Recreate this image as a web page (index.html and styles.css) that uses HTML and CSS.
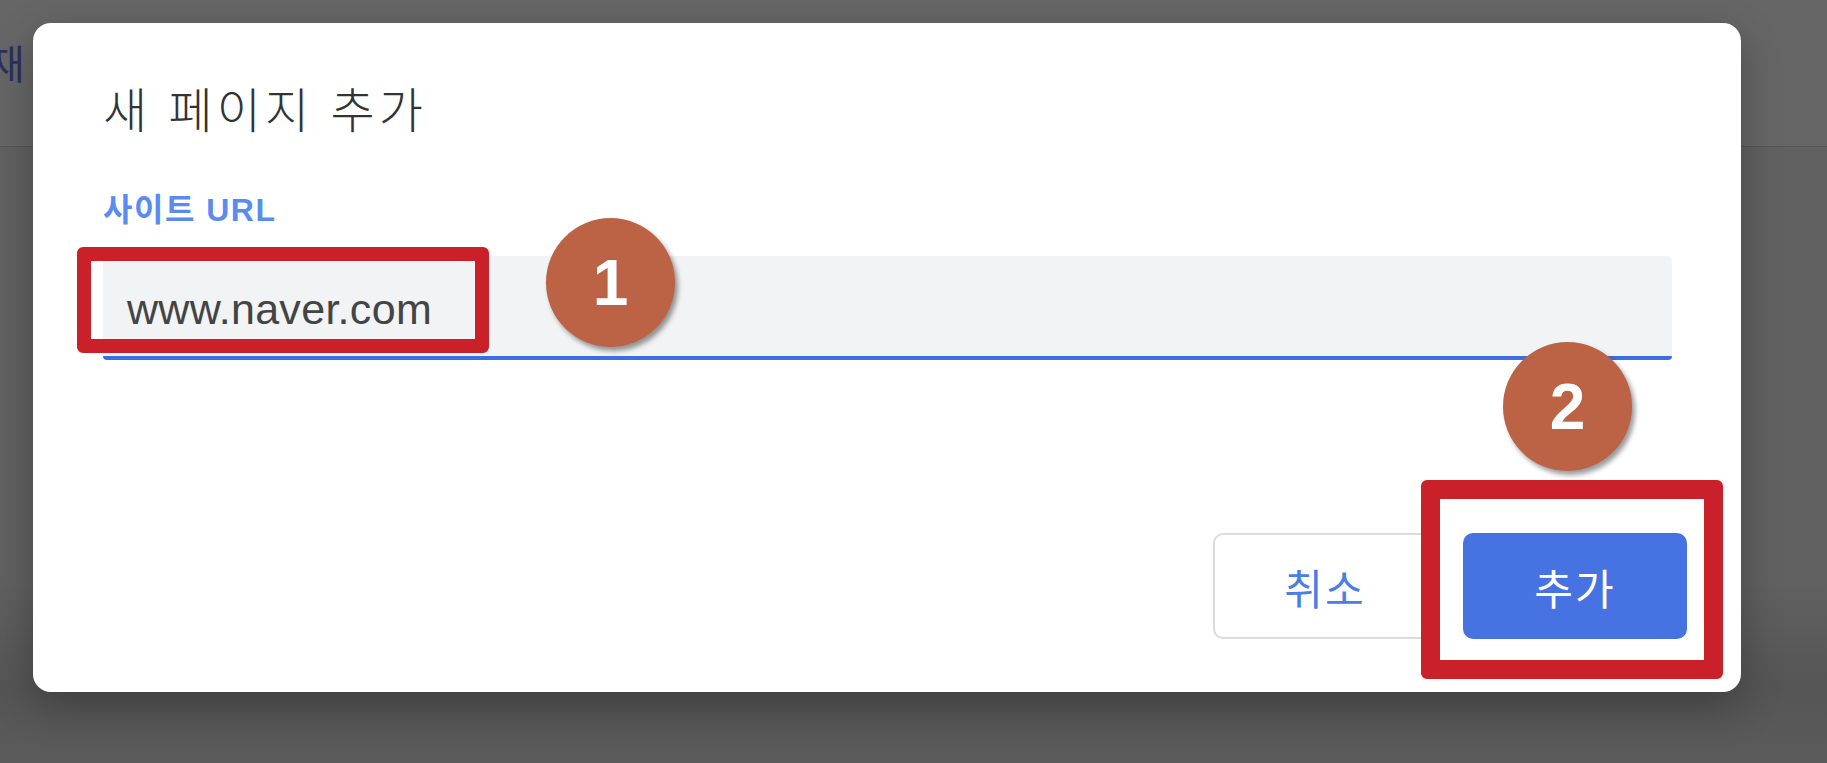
FILE: index.html
```html
<!DOCTYPE html>
<html lang="ko">
<head>
    <meta charset="UTF-8">
    <meta name="viewport" content="width=device-width, initial-scale=1.0">
    <title>새 페이지 추가</title>
    <link rel="stylesheet" href="styles.css">
</head>
<body>
    <div class="page">
        <div class="page-header">
            <span class="page-header-text">재</span>
        </div>
        <div class="page-body"></div>
    </div>

    <div class="dialog">
        <h1 class="dialog-title">새 페이지 추가</h1>
        <label class="field-label" for="site-url">사이트 URL</label>
        <div class="url-field" id="site-url">www.naver.com</div>
        <div class="dialog-footer">
            <button class="btn btn-cancel">취소</button>
            <button class="btn btn-add">추가</button>
        </div>
    </div>

    <!-- tutorial markers drawn over the dialog -->
    <div class="mark-box mark-box-url"></div>
    <div class="mark-box mark-box-add"></div>
    <div class="step step-one">1</div>
    <div class="step step-two">2</div>
</body>
</html>
```

FILE: styles.css
```css
body {
    margin: 0;
    padding: 0;
    width: 1827px;
    height: 763px;
    overflow: hidden;
    position: relative;
    background-color: #606060;
    font-family: 'Noto Sans CJK KR', 'Noto Sans', sans-serif;
}
.page {
    height: 100%;
    display: flex;
    flex-direction: column;
}
.page-header {
    height: 146px;
    background-color: #666666;
    border-bottom: 1px solid #555555;
    overflow: hidden;
}
.page-header-text {
    display: block;
    margin: 38px 0 0 -12px;
    font-size: 40px;
    line-height: 48px;
    color: #2b3060;
}
.page-body {
    flex: 1;
    background: linear-gradient(to bottom, #616161 0%, #616161 70%, #555555 88%, #5b5b5b 100%);
}
.dialog {
    position: absolute;
    left: 33px;
    top: 23px;
    width: 1708px;
    height: 669px;
    box-sizing: border-box;
    padding: 60px 54px 53px 70px;
    background-color: #FFFFFF;
    border-radius: 18px;
    box-shadow: 0 14px 40px rgba(0, 0, 0, 0.28);
    display: flex;
    flex-direction: column;
}
.dialog-title {
    margin: 0;
    font-size: 48px;
    line-height: 48px;
    font-weight: 300;
    letter-spacing: 4px;
    color: #333333;
}
.field-label {
    display: block;
    margin-top: 63px;
    font-family: 'Liberation Sans', 'Noto Sans CJK KR', sans-serif;
    font-size: 32px;
    line-height: 32px;
    font-weight: bold;
    letter-spacing: 1.5px;
    color: #5a8cf0;
}
.url-field {
    margin: 30px 15px 0 0;
    height: 104px;
    box-sizing: border-box;
    padding: 6px 24px 0;
    display: flex;
    align-items: center;
    background-color: #f1f3f4;
    border-bottom: 4px solid #3a6ee2;
    border-radius: 6px 6px 4px 4px;
    font-family: 'Liberation Sans', Arial, sans-serif;
    font-size: 43px;
    letter-spacing: 0.3px;
    color: #444444;
}
.dialog-footer {
    margin-top: auto;
    display: flex;
    justify-content: flex-end;
    gap: 26px;
}
.btn {
    width: 224px;
    height: 106px;
    border-radius: 10px;
    font-family: 'Noto Sans CJK KR', sans-serif;
    font-size: 42px;
    font-weight: normal;
    letter-spacing: 2px;
    cursor: pointer;
}
.btn-cancel {
    background-color: #FFFFFF;
    border: 2px solid #dadce0;
    color: #4a7de8;
}
.btn-add {
    background-color: #4773e2;
    border: none;
    color: #FFFFFF;
}
.mark-box {
    position: absolute;
    box-sizing: border-box;
    border: 14px solid #c9202a;
    border-radius: 6px;
}
.mark-box-url {
    left: 77px;
    top: 247px;
    width: 412px;
    height: 106px;
}
.mark-box-add {
    left: 1421px;
    top: 480px;
    width: 302px;
    height: 199px;
    border-width: 19px;
}
.step {
    position: absolute;
    width: 129px;
    height: 129px;
    border-radius: 50%;
    background-color: #bb6344;
    box-shadow: 3px 4px 5px rgba(0, 0, 0, 0.4);
    color: #FFFFFF;
    font-family: 'Liberation Sans', Arial, sans-serif;
    font-weight: bold;
    font-size: 64px;
    display: flex;
    align-items: center;
    justify-content: center;
}
.step-one {
    left: 546px;
    top: 218px;
}
.step-two {
    left: 1503px;
    top: 342px;
}
```
